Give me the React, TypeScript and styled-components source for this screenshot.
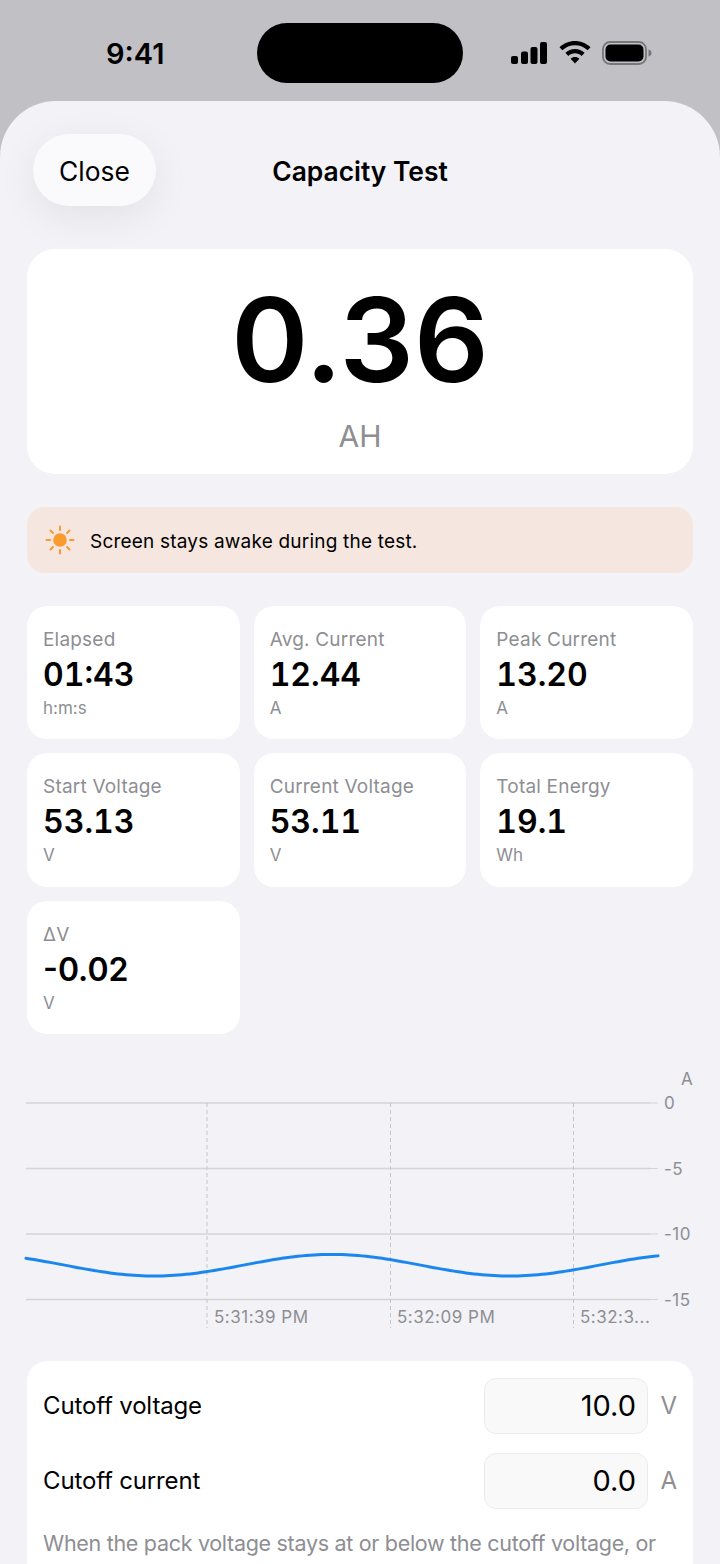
import React from "react";
import styled, { createGlobalStyle } from "styled-components";

const GlobalStyle = createGlobalStyle`
    html, body {
        margin: 0;
        padding: 0;
        height: 1564px;
        overflow: hidden;
        background: #c1c0c5;
    }
    * {
        box-sizing: border-box;
    }
`;

const stats = [
    { label: "Elapsed", value: "01:43", unit: "h:m:s" },
    { label: "Avg. Current", value: "12.44", unit: "A" },
    { label: "Peak Current", value: "13.20", unit: "A" },
    { label: "Start Voltage", value: "53.13", unit: "V" },
    { label: "Current Voltage", value: "53.11", unit: "V" },
    { label: "Total Energy", value: "19.1", unit: "Wh" },
    { label: "ΔV", value: "-0.02", unit: "V" },
];

function SignalIcon() {
    return (
        <svg width="36" height="22" viewBox="0 0 36 22">
            <rect x="0" y="14" width="7" height="8" rx="2" fill="#000" />
            <rect x="10" y="9.500" width="7" height="12.500" rx="2" fill="#000" />
            <rect x="19.500" y="5" width="7" height="17" rx="2" fill="#000" />
            <rect x="29" y="0" width="7" height="22" rx="2" fill="#000" />
        </svg>
    );
}

function WifiIcon() {
    return (
        <svg width="32" height="23" viewBox="0 0 32 23">
            <path d="M16 0C10 0 4.600 2.400 0.500 6.200L3.400 9.300C6.700 6.200 11.100 4.300 16 4.300C20.900 4.300 25.300 6.200 28.600 9.300L31.500 6.200C27.400 2.400 22 0 16 0Z" fill="#000" />
            <path d="M16 8C12.300 8 9 9.400 6.400 11.800L9.300 14.900C11.100 13.300 13.400 12.300 16 12.300C18.600 12.300 20.900 13.300 22.700 14.900L25.600 11.800C23 9.400 19.700 8 16 8Z" fill="#000" />
            <path d="M16 16C14.300 16 12.800 16.600 11.600 17.700L16 22.500L20.400 17.700C19.200 16.600 17.700 16 16 16Z" fill="#000" />
        </svg>
    );
}

function BatteryIcon() {
    return (
        <svg width="50" height="24" viewBox="0 0 50 24">
            <rect x="1" y="1" width="43" height="22" rx="7" fill="none" stroke="#77767b" strokeWidth="1.800" />
            <rect x="3.500" y="3.500" width="38" height="17" rx="5" fill="#000" />
            <path d="M46.500 8.500C48.500 9 49.500 10.300 49.500 12C49.500 13.700 48.500 15 46.500 15.500Z" fill="#77767b" />
        </svg>
    );
}

function SunIcon() {
    const rays = [0, 45, 90, 135, 180, 225, 270, 315];
    return (
        <svg width="30" height="30" viewBox="0 0 30 30">
            <circle cx="15" cy="15" r="6.800" fill="#fa9a2f" />
            {rays.map((angle) => (
                <line
                    key={angle}
                    x1="15"
                    y1="1.500"
                    x2="15"
                    y2="5"
                    stroke="#fa9a2f"
                    strokeWidth="2"
                    strokeLinecap="round"
                    transform={`rotate(${angle} 15 15)`}
                />
            ))}
        </svg>
    );
}

// the current trace is a slow wave, sampled across the plot
function tracePath() {
    const points: string[] = [];
    for (let x = 26; x <= 658; x += 4) {
        const y = 182.2 + 10.8 * Math.cos((2 * Math.PI * (x - 154)) / 356);
        points.push(`${x} ${y.toFixed(2)}`);
    }
    return "M" + points.join(" L");
}

function CurrentChart() {
    const gridY = [20, 85.5, 151, 216.5];
    const dashX = [207, 390.500, 573.500];
    return (
        <ChartSvg viewBox="0 -20 720 280">
            {gridY.map((y) => (
                <line key={y} x1="26" y1={y} x2="650" y2={y} stroke="#d3d3d8" strokeWidth="1.400" />
            ))}
            {gridY.map((y) => (
                <line key={y} x1="650" y1={y} x2="658" y2={y} stroke="#d3d3d8" strokeWidth="1" />
            ))}
            {dashX.map((x) => (
                <line key={x} x1={x} y1="20" x2={x} y2="245" stroke="#c6c6ca" strokeWidth="1" strokeDasharray="4 3" />
            ))}
            <path d={tracePath()} fill="none" stroke="#1a86ee" strokeWidth="3" strokeLinecap="round" strokeLinejoin="round" />
            <ChartText x="681" y="2">A</ChartText>
            <ChartText x="664" y="26">0</ChartText>
            <ChartText x="664" y="91.500">-5</ChartText>
            <ChartText x="664" y="157">-10</ChartText>
            <ChartText x="664" y="222.500">-15</ChartText>
            <ChartText x="214" y="240">5:31:39 PM</ChartText>
            <ChartText x="397" y="240">5:32:09 PM</ChartText>
            <ChartText x="580" y="240">5:32:3...</ChartText>
        </ChartSvg>
    );
}

export default function App() {
    return (
        <>
            <GlobalStyle />
            <Screen>
                <StatusBar>
                    <Time>9:41</Time>
                    <Island />
                    <StatusIcons>
                        <SignalIcon />
                        <WifiIcon />
                        <BatteryIcon />
                    </StatusIcons>
                </StatusBar>
                <Sheet>
                    <Header>
                        <CloseButton>Close</CloseButton>
                        <Title>Capacity Test</Title>
                    </Header>
                    <Content>
                        <HeroCard>
                            <HeroValue>0.36</HeroValue>
                            <HeroUnit>AH</HeroUnit>
                        </HeroCard>
                        <Notice>
                            <SunIcon />
                            <NoticeText>Screen stays awake during the test.</NoticeText>
                        </Notice>
                        <StatGrid>
                            {stats.map((stat) => (
                                <StatCard key={stat.label}>
                                    <StatLabel>{stat.label}</StatLabel>
                                    <StatValue $signed={stat.value.startsWith("-")}>{stat.value}</StatValue>
                                    <StatUnit>{stat.unit}</StatUnit>
                                </StatCard>
                            ))}
                        </StatGrid>
                        <CurrentChart />
                        <SettingsCard>
                            <SettingRow>
                                <SettingLabel>Cutoff voltage</SettingLabel>
                                <SettingInput>10.0</SettingInput>
                                <SettingUnit>V</SettingUnit>
                            </SettingRow>
                            <SettingRow>
                                <SettingLabel>Cutoff current</SettingLabel>
                                <SettingInput>0.0</SettingInput>
                                <SettingUnit>A</SettingUnit>
                            </SettingRow>
                            <SettingHint>
                                When the pack voltage stays at or below the cutoff voltage, or
                                the measured current stays below the cutoff current for a short
                                time, the test stops on its own.
                            </SettingHint>
                        </SettingsCard>
                    </Content>
                </Sheet>
            </Screen>
        </>
    );
}

const Screen = styled.div`
    width: 720px;
    height: 1564px;
    overflow: hidden;
    background: #c1c0c5;
    font-family: Inter, "Liberation Sans", sans-serif;
    color: #000;
`;

const StatusBar = styled.div`
    height: 101px;
    padding: 23px 66px 0 106px;
    display: flex;
    align-items: flex-start;
`;

const Time = styled.div`
    width: 151px;
    height: 60px;
    line-height: 62px;
    font-size: 29px;
    font-weight: 600;
`;

const Island = styled.div`
    width: 206px;
    height: 60px;
    border-radius: 30px;
    background: #000;
`;

const StatusIcons = styled.div`
    height: 60px;
    margin-left: 48px;
    display: flex;
    align-items: center;
    gap: 11.5px;
    padding-bottom: 1px;
`;

const Sheet = styled.div`
    height: 1463px;
    background: #f2f2f7;
    border-radius: 56px 56px 0 0;
`;

const Header = styled.div`
    position: relative;
    height: 148px;
    display: flex;
    align-items: flex-start;
    justify-content: center;
    padding-top: 33px;
`;

const CloseButton = styled.div`
    position: absolute;
    left: 33px;
    top: 33px;
    width: 123px;
    height: 72px;
    border-radius: 36px;
    background: #fafafd;
    box-shadow: 0 10px 40px rgba(0, 0, 0, 0.07);
    padding-top: 2px;
    display: flex;
    align-items: center;
    justify-content: center;
    font-size: 26.4px;
`;

const Title = styled.div`
    height: 72px;
    line-height: 74px;
    font-size: 26.4px;
    font-weight: 600;
`;

const Content = styled.div`
    padding: 0 27px;
    display: flex;
    flex-direction: column;
`;

const HeroCard = styled.div`
    height: 225px;
    border-radius: 28px;
    background: #fff;
    display: flex;
    flex-direction: column;
    align-items: center;
`;

const HeroValue = styled.div`
    margin-top: 28px;
    height: 125px;
    line-height: 125px;
    font-size: 117px;
    font-weight: 600;
`;

const HeroUnit = styled.div`
    margin-top: 12px;
    font-size: 30px;
    line-height: 44px;
    color: #8e8e93;
`;

const Notice = styled.div`
    margin-top: 33px;
    height: 66px;
    border-radius: 18px;
    background: #f5e6df;
    padding: 0 18px;
    display: flex;
    align-items: center;
    gap: 15px;
`;

const NoticeText = styled.div`
    padding-top: 2px;
    font-size: 19px;
    letter-spacing: 0.2px;
`;

const StatGrid = styled.div`
    margin-top: 33px;
    display: grid;
    grid-template-columns: repeat(3, 1fr);
    gap: 14px;
`;

const StatCard = styled.div`
    height: 133.33px;
    border-radius: 20px;
    background: #fff;
    padding: 21px 16px 0;
    display: flex;
    flex-direction: column;
`;

const StatLabel = styled.div`
    font-size: 19px;
    line-height: 26px;
    letter-spacing: 0.2px;
    color: #8e8e93;
`;

const StatValue = styled.div<{ $signed: boolean }>`
    padding-top: 1px;
    font-size: 32px;
    line-height: 42px;
    font-weight: 600;
    font-variant-numeric: ${(p) => (p.$signed ? "normal" : "tabular-nums")};
`;

const StatUnit = styled.div`
    font-size: 17px;
    line-height: 24px;
    color: #8e8e93;
`;

const ChartSvg = styled.svg`
    width: 720px;
    height: 280px;
    margin: 29px 0 0 -27px;
    flex-shrink: 0;
    display: block;
`;

const ChartText = styled.text`
    font-family: Inter, "Liberation Sans", sans-serif;
    font-size: 17px;
    letter-spacing: 0.5px;
    fill: #8e8e93;
`;

const SettingsCard = styled.div`
    margin-top: 18px;
    border-radius: 20px;
    background: #fff;
    padding: 17px 16px 20px;
`;

const SettingRow = styled.div`
    height: 56px;
    margin-bottom: 19px;
    display: flex;
    align-items: center;
`;

const SettingLabel = styled.div`
    flex: 1;
    font-size: 24px;
    letter-spacing: -0.15px;
`;

const SettingInput = styled.div`
    width: 164px;
    height: 56px;
    border-radius: 12px;
    border: 1px solid #ececef;
    background: #f9f9fa;
    padding: 0 11px;
    display: flex;
    align-items: center;
    justify-content: flex-end;
    font-size: 29px;
`;

const SettingUnit = styled.div`
    width: 29px;
    text-align: right;
    font-size: 24px;
    color: #8e8e93;
`;

const SettingHint = styled.div`
    font-size: 21.5px;
    line-height: 30px;
    letter-spacing: -0.3px;
    color: #8e8e93;
`;
